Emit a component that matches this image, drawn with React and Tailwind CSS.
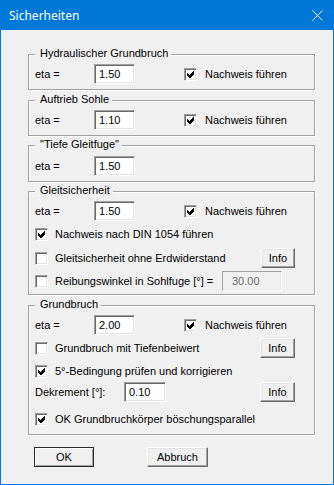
import React from "react";

function Check({ checked }) {
  return (
    <span className="flex h-[13px] w-[13px] shrink-0 border border-t-[#a0a0a0] border-l-[#a0a0a0] border-r-white border-b-white bg-white shadow-[inset_1px_1px_0_#696969,inset_-1px_-1px_0_#e3e3e3]">
      {checked && (
        <svg width="11" height="11" viewBox="0 0 11 11" shapeRendering="crispEdges">
          <polygon points="2,4 4,6 8,2 9,2 9,5 5,9 4,9 2,7" fill="#000" />
        </svg>
      )}
    </span>
  );
}

function Edit({ value, className = "", disabled }) {
  return (
    <span
      className={`flex h-[20px] items-center pl-[4px] border border-t-[#a0a0a0] border-l-[#a0a0a0] border-r-white border-b-white ${
        disabled
          ? "bg-[#f0f0f0] text-[#6d6d6d] shadow-[inset_-1px_-1px_0_#e3e3e3]"
          : "bg-white shadow-[inset_1px_1px_0_#696969,inset_-1px_-1px_0_#e3e3e3]"
      } ${className}`}
    >
      {value}
    </span>
  );
}

function Btn({ children, className = "", isDefault }) {
  return (
    <span
      className={`flex h-[20px] items-center justify-center bg-[#f0f0f0] border ${
        isDefault
          ? "border-[#2b2b2b] shadow-[inset_1px_1px_0_#fff,inset_-1px_-1px_0_#a0a0a0]"
          : "border-t-white border-l-white border-r-[#696969] border-b-[#696969] shadow-[inset_-1px_-1px_0_#a0a0a0,inset_1px_1px_0_#e3e3e3]"
      } ${className}`}
    >
      {children}
    </span>
  );
}

function Group({ title, className = "", children }) {
  return (
    <div
      className={`relative ml-[27px] w-[287px] border border-[#a0a0a0] pl-[6px] pr-[19px] shadow-[inset_1px_1px_0_#fff,1px_1px_0_#fff] ${className}`}
    >
      <span className="absolute left-[6px] top-[-8px] bg-[#f0f0f0] pl-[5px] pr-[3px] leading-[13px]">
        {title}
      </span>
      {children}
    </div>
  );
}

function EtaRow({ value, check }) {
  return (
    <div className="flex h-[20px] items-center">
      <span className="w-[59px]">eta =</span>
      <Edit value={value} className="w-[41px]" />
      {check && (
        <>
          <span className="ml-[49px]">
            <Check checked />
          </span>
          <span className="ml-[8px]">Nachweis führen</span>
        </>
      )}
    </div>
  );
}

function CheckRow({ checked, label, className = "", children }) {
  return (
    <div className={`flex items-center ${className}`}>
      <Check checked={checked} />
      <span className="ml-[7px]">{label}</span>
      {children}
    </div>
  );
}

export default function App() {
  return (
    <div className="flex h-[485px] w-[334px] flex-col bg-[#0078d7] px-[1px] pb-[1px] font-['Liberation_Sans',Arial,sans-serif] text-[11px] leading-[13px] text-black">
      <div className="flex h-[30px] items-center justify-between pl-[8px] pr-[10px] text-white">
        <span className="font-['Noto_Sans',sans-serif] text-[12px]">Sicherheiten</span>
        <svg width="11" height="11" viewBox="0 0 11 11">
          <path d="M0.5 0.5 L10.5 10.5 M10.5 0.5 L0.5 10.5" stroke="#fff" strokeWidth="1" />
        </svg>
      </div>

      <div className="flex flex-1 flex-col bg-[#f0f0f0]">
        <Group title="Hydraulischer Grundbruch" className="mt-[24px] pt-[9px] pb-[5px]">
          <EtaRow value="1.50" check />
        </Group>

        <Group title="Auftrieb Sohle" className="mt-[10px] pt-[9px] pb-[5px]">
          <EtaRow value="1.10" check />
        </Group>

        <Group title={'"Tiefe Gleitfuge"'} className="mt-[9px] pt-[10px] pb-[5px]">
          <EtaRow value="1.50" />
        </Group>

        <Group title="Gleitsicherheit" className="mt-[9px] pt-[9px] pb-[2px]">
          <EtaRow value="1.50" check />
          <CheckRow checked label="Nachweis nach DIN 1054 führen" className="mt-[2px] h-[22px]" />
          <CheckRow label="Gleitsicherheit ohne Erdwiderstand" className="mt-[2px] h-[22px]">
            <Btn className="ml-auto w-[34px]">Info</Btn>
          </CheckRow>
          <CheckRow label="Reibungswinkel in Sohlfuge [°] =" className="mt-[1px] h-[22px]">
            <Edit value="30.00" disabled className="ml-auto mr-[13px] w-[60px] pl-[9px]" />
          </CheckRow>
        </Group>

        <Group title="Grundbruch" className="mt-[10px] pt-[9px] pb-[4px]">
          <EtaRow value="2.00" check />
          <CheckRow label="Grundbruch mit Tiefenbeiwert" className="mt-[3px] h-[20px]">
            <Btn className="ml-auto w-[35px]">Info</Btn>
          </CheckRow>
          <CheckRow checked label="5°-Bedingung prüfen und korrigieren" className="mt-[2px] h-[22px]" />
          <div className="flex h-[20px] items-center">
            <span className="w-[89px]">Dekrement [°]:</span>
            <Edit value="0.10" className="w-[42px]" />
            <Btn className="ml-auto w-[35px]">Info</Btn>
          </div>
          <CheckRow checked label="OK Grundbruchkörper böschungsparallel" className="mt-[6px] h-[22px]" />
        </Group>

        <div className="ml-[33px] mt-[12px] flex">
          <Btn isDefault className="w-[60px]">
            OK
          </Btn>
          <Btn className="ml-[53px] w-[61px]">Abbruch</Btn>
        </div>
      </div>
    </div>
  );
}
